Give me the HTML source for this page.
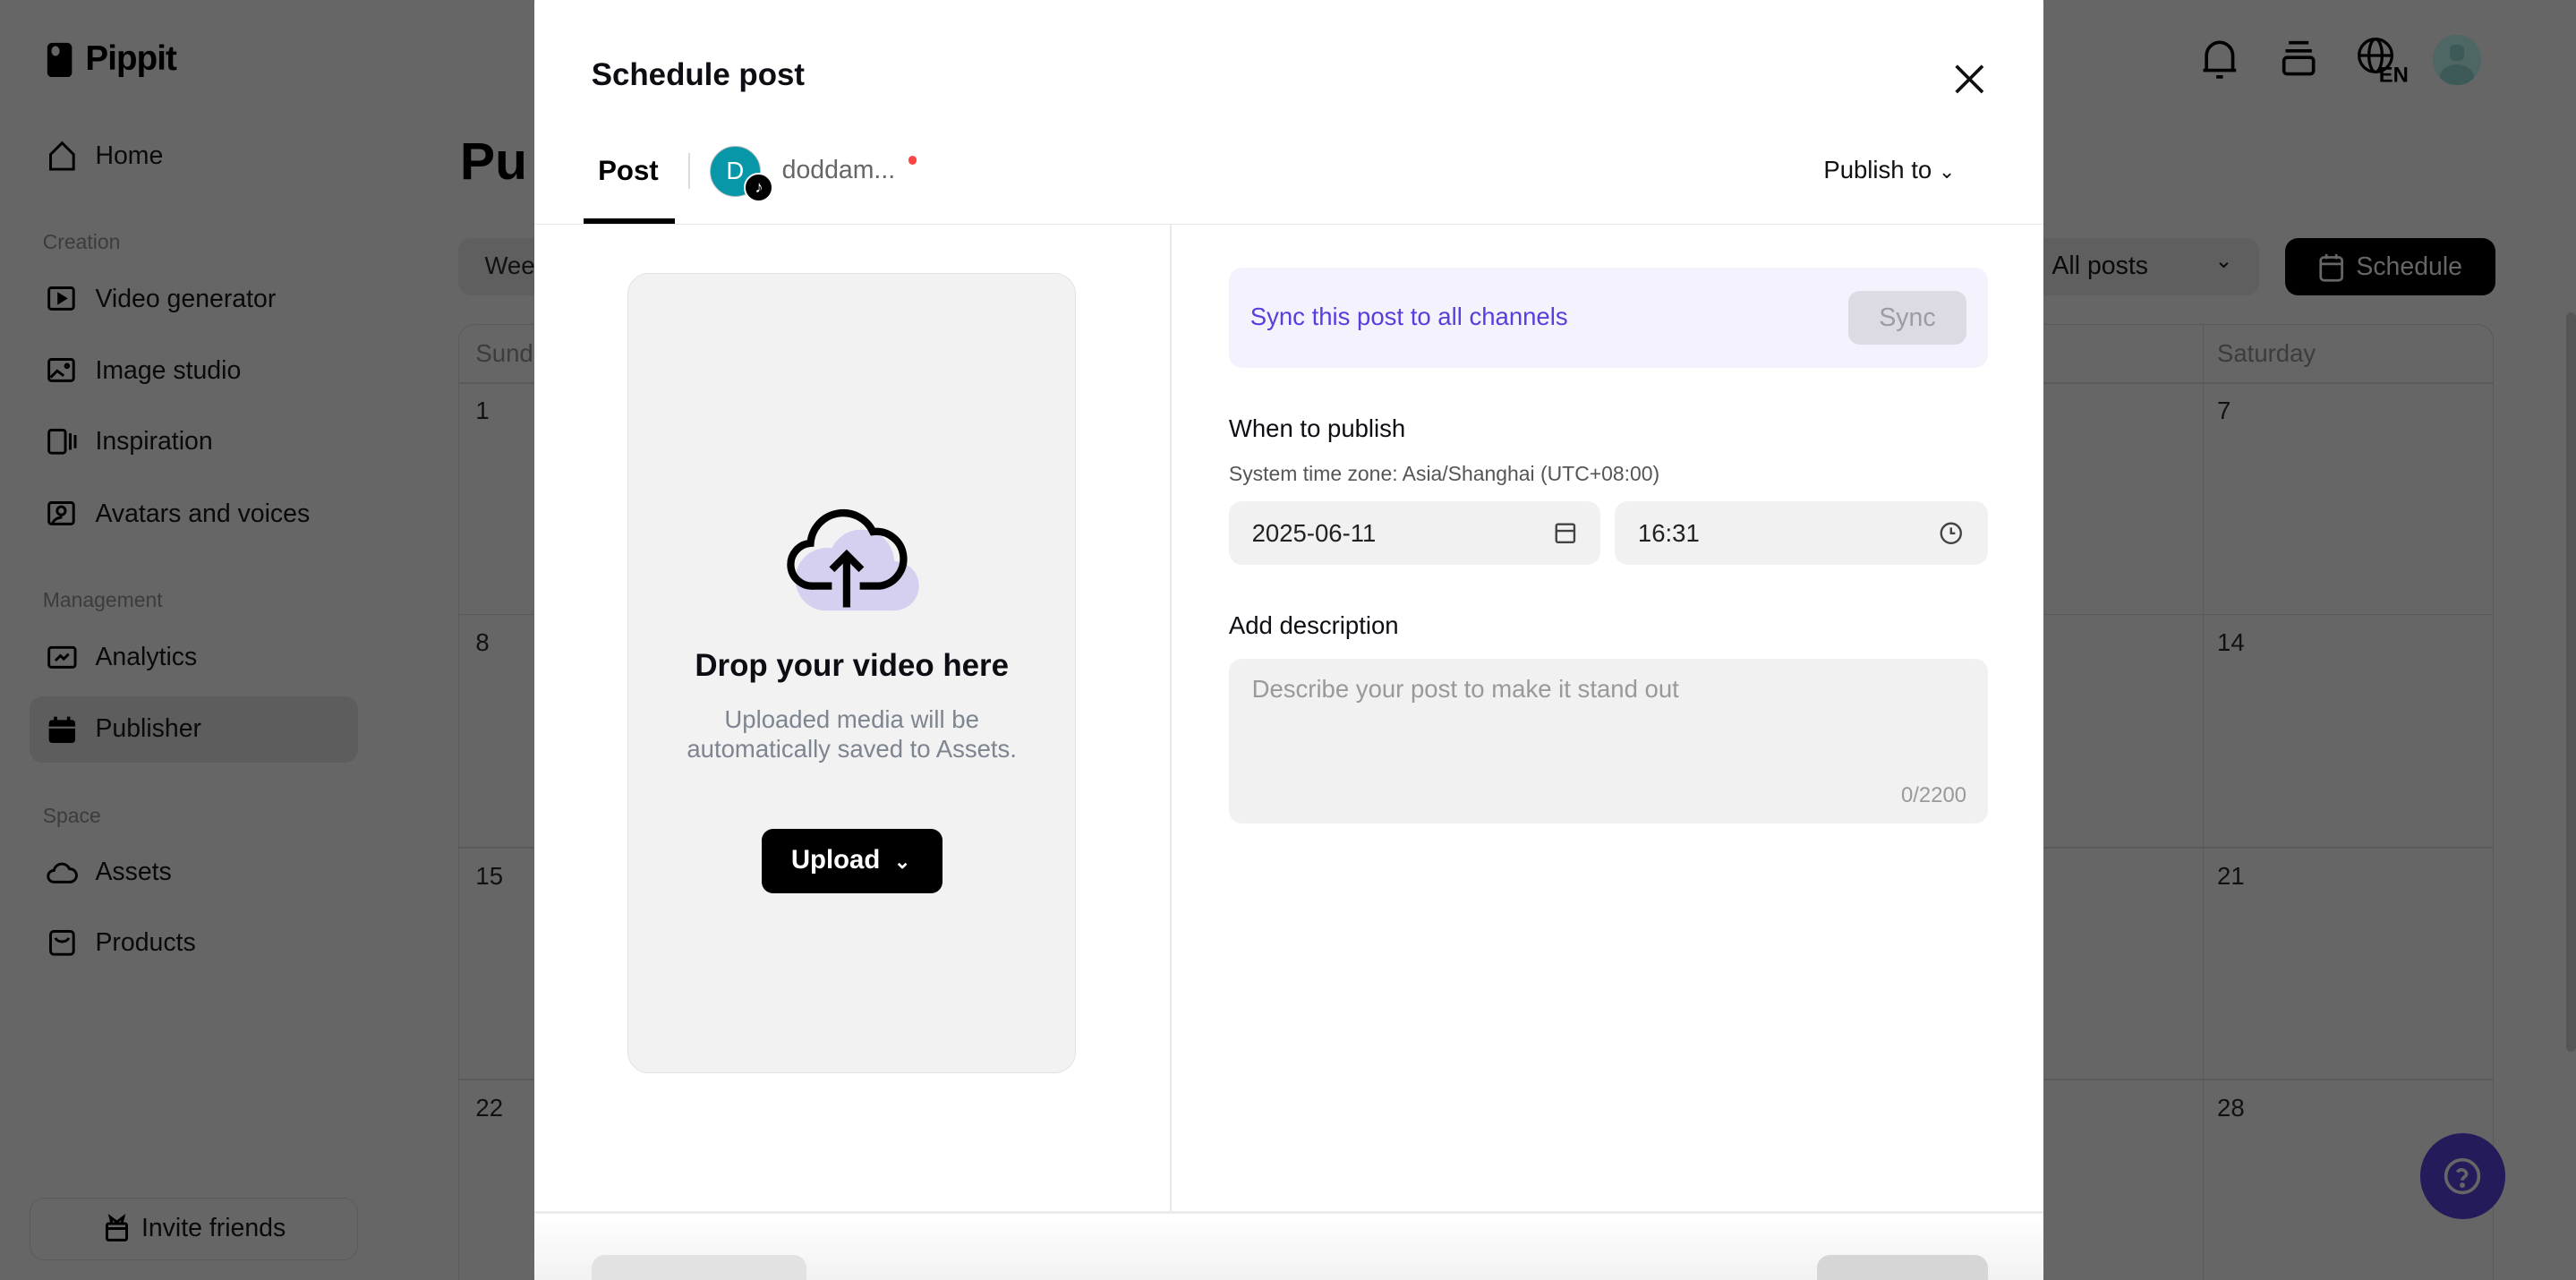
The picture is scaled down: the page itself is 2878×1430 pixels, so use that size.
<!DOCTYPE html>
<html><head><meta charset="utf-8"><style>
*{box-sizing:border-box;margin:0;padding:0}
html,body{width:2878px;height:1430px;overflow:hidden;background:#666}
#r{zoom:1.83546;width:1568px;height:779px;position:relative;background:#666;font-family:"Liberation Sans",sans-serif;color:#000;overflow:hidden}
.a{position:absolute}
.nav{position:absolute;left:28px;font-size:15.5px;color:#0a0a0a;display:flex;align-items:center;gap:10px}
.nav svg{width:20px;height:20px}
.sec{position:absolute;left:26px;font-size:12.5px;color:#3c3c3c}
.cal{position:absolute;left:279px;top:197px;width:1239px;height:600px;border:1px solid #5a5a5a;border-radius:10px}
.vl{position:absolute;top:0;bottom:0;width:1px;background:#5a5a5a}
.hl{position:absolute;left:0;right:0;height:1px;background:#5a5a5a}
.dn{position:absolute;font-size:15px;color:#111}
.m{position:absolute;left:325px;top:-14px;width:919px;height:820px;background:#fff;border-radius:16px;overflow:hidden}
.in{position:absolute;background:#f1f1f1;border-radius:8px}
</style></head><body><div id="r">
<!-- sidebar -->
<div class="a" style="left:28px;top:24px;display:flex;align-items:center;gap:6px">
<svg width="18" height="22" viewBox="0 0 18 22"><rect x="1" y="1" width="15" height="21" rx="3" fill="#000"/><ellipse cx="6" cy="6" rx="2.5" ry="3" fill="#666"/></svg>
<span style="font-size:21px;font-weight:bold;letter-spacing:-0.5px">Pippit</span></div>
<div class="nav" style="top:85px"><svg viewBox="0 0 20 20" fill="none" stroke="#000" stroke-width="1.6"><path d="M3 9l7-7 7 7v9H3z"/></svg>Home</div>
<div class="sec" style="top:140px">Creation</div>
<div class="nav" style="top:172px"><svg viewBox="0 0 20 20" fill="none" stroke="#000" stroke-width="1.6"><rect x="2" y="3" width="15" height="13" rx="1.5"/><path d="M8 7v5l4-2.5z" fill="#000"/></svg>Video generator</div>
<div class="nav" style="top:216px"><svg viewBox="0 0 20 20" fill="none" stroke="#000" stroke-width="1.6"><rect x="2" y="3" width="15" height="13" rx="1.5"/><path d="M3 14l4-4 4 3"/><circle cx="13" cy="7" r="1"/></svg>Image studio</div>
<div class="nav" style="top:259px"><svg viewBox="0 0 20 20" fill="none" stroke="#000" stroke-width="1.6"><rect x="2" y="3" width="10" height="14" rx="1.5"/><path d="M15 5v10M18 6v8"/></svg>Inspiration</div>
<div class="nav" style="top:303px"><svg viewBox="0 0 20 20" fill="none" stroke="#000" stroke-width="1.6"><rect x="2" y="3" width="15" height="13" rx="1.5"/><circle cx="9.5" cy="8" r="2.5"/><path d="M4 16c1-3 4-4 6-4"/></svg>Avatars and voices</div>
<div class="sec" style="top:358px">Management</div>
<div class="nav" style="top:390px"><svg viewBox="0 0 20 20" fill="none" stroke="#000" stroke-width="1.6"><rect x="2" y="4" width="16" height="12" rx="1.5"/><path d="M6 12l3-3 2 2 3-3"/></svg>Analytics</div>
<div class="a" style="left:18px;top:424px;width:200px;height:40px;background:#5d5d5d;border-radius:8px"></div>
<div class="nav" style="top:434px"><svg viewBox="0 0 20 20"><rect x="2" y="4" width="16" height="14" rx="2" fill="#000"/><rect x="5" y="2" width="2" height="4" fill="#000"/><rect x="13" y="2" width="2" height="4" fill="#000"/><rect x="2" y="8" width="16" height="1.2" fill="#5d5d5d"/></svg>Publisher</div>
<div class="sec" style="top:489px">Space</div>
<div class="nav" style="top:521px"><svg viewBox="0 0 20 20" fill="none" stroke="#000" stroke-width="1.6"><path d="M5 16a3.5 3.5 0 010-7 5 5 0 019.5-1A4 4 0 0115 16z"/></svg>Assets</div>
<div class="nav" style="top:564px"><svg viewBox="0 0 20 20" fill="none" stroke="#000" stroke-width="1.6"><rect x="3" y="3" width="14" height="14" rx="2"/><path d="M6 7c1 3 7 3 8 0"/></svg>Products</div>
<div class="a" style="left:18px;top:729px;width:200px;height:38px;border:1px solid #5a5a5a;border-radius:9px;display:flex;align-items:center;justify-content:center;gap:6px;font-size:15.5px;color:#0a0a0a"><svg width="18" height="18" viewBox="0 0 18 18" fill="none" stroke="#000" stroke-width="1.6"><rect x="3" y="6" width="12" height="10" rx="1"/><path d="M3 9h12M6 6L5 2l4 3 4-3-1 4"/></svg>Invite friends</div>
<!-- main -->
<div class="a" style="left:280px;top:80px;font-size:32px;font-weight:bold">Pu</div>
<div class="a" style="left:279px;top:145px;width:60px;height:35px;background:#5f5f5f;border-radius:8px;font-size:15px;padding:8px 16px;color:#111">Week</div>
<div class="a" style="left:1230px;top:145px;width:145px;height:35px;background:#5f5f5f;border-radius:8px;font-size:15.5px;padding:8px 19px;color:#0a0a0a">All posts<span style="position:absolute;right:16px;top:6px;font-size:13px">&#8964;</span></div>
<div class="a" style="left:1391px;top:145px;width:128px;height:35px;background:#000;border-radius:8px;display:flex;align-items:center;justify-content:center;gap:7px;color:#666;font-size:15.5px"><svg width="16" height="18" viewBox="0 0 16 18" fill="none" stroke="#666" stroke-width="1.5"><rect x="1.5" y="3" width="13" height="14" rx="2"/><path d="M1.5 7h13M5 1v3M11 1v3"/></svg>Schedule</div>
<svg class="a" style="left:1338px;top:22px" width="26" height="28" viewBox="0 0 26 28" fill="none" stroke="#000" stroke-width="2"><path d="M5 20V12a8 8 0 0116 0v8M3 21h20M11 25h4M13 3v2"/></svg>
<svg class="a" style="left:1388px;top:24px" width="22" height="24" viewBox="0 0 22 24" fill="none" stroke="#000" stroke-width="2"><path d="M5 2h12M3 7h16"/><rect x="2" y="11" width="18" height="10" rx="2"/></svg>
<svg class="a" style="left:1434px;top:22px" width="34" height="30" viewBox="0 0 34 30"><g fill="none" stroke="#000" stroke-width="1.8"><circle cx="12" cy="12" r="10"/><ellipse cx="12" cy="12" rx="4" ry="10"/><path d="M2 12h20"/></g><text x="14" y="28" font-size="13" font-weight="bold" font-family="Liberation Sans">EN</text></svg>
<div class="a" style="left:1481px;top:21px;width:29px;height:31px;border-radius:50%;background:#4e6664;overflow:hidden"><div class="a" style="left:10px;top:6px;width:9px;height:10px;background:#3d5a58;border-radius:3px"></div><div class="a" style="left:4px;top:18px;width:21px;height:16px;background:#3d5a58;border-radius:50%"></div></div>
<!-- calendar -->
<div class="cal">
<div class="hl" style="top:35px"></div><div class="hl" style="top:176px"></div><div class="hl" style="top:318px"></div><div class="hl" style="top:459px"></div>
<div class="vl" style="left:1061px"></div>
<div class="dn" style="left:10px;top:9px;color:#3c3c3c">Sunday</div>
<div class="dn" style="left:1070px;top:9px;color:#3c3c3c">Saturday</div>
<div class="dn" style="left:10px;top:44px">1</div><div class="dn" style="left:1070px;top:44px">7</div>
<div class="dn" style="left:10px;top:185px">8</div><div class="dn" style="left:1070px;top:185px">14</div>
<div class="dn" style="left:10px;top:327px">15</div><div class="dn" style="left:1070px;top:327px">21</div>
<div class="dn" style="left:10px;top:468px">22</div><div class="dn" style="left:1070px;top:468px">28</div>
</div>
<div class="a" style="left:1562px;top:190px;width:6px;height:450px;background:#555;border-radius:3px"></div>
<div class="a" style="left:1473px;top:690px;width:52px;height:52px;border-radius:50%;background:#241b5a"></div>
<svg class="a" style="left:1487px;top:704px" width="24" height="24" viewBox="0 0 24 24" fill="none" stroke="#666" stroke-width="2"><circle cx="12" cy="12" r="10"/><path d="M9 9.5a3 3 0 015.5 1c0 2-2.5 2-2.5 4"/><circle cx="12" cy="17.5" r=".6" fill="#666"/></svg>
<!-- modal -->
<div class="m">
<div class="a" style="left:35px;top:49px;font-size:19px;font-weight:bold;color:#0d0d14">Schedule post</div>
<svg class="a" style="left:864px;top:52px" width="20" height="20" viewBox="0 0 20 20" stroke="#111" stroke-width="2"><path d="M2 2l16 16M18 2L2 18"/></svg>
<div class="a" style="left:39px;top:108px;font-size:17px;font-weight:bold">Post</div>
<div class="a" style="left:30px;top:147px;width:56px;height:3px;background:#000"></div>
<div class="a" style="left:94px;top:107px;width:1px;height:22px;background:#ddd"></div>
<div class="a" style="left:107px;top:103px;width:31px;height:31px;border-radius:50%;background:#0797a8;border:1px solid #bbb;color:#fff;font-size:15px;text-align:center;line-height:29px">D</div>
<div class="a" style="left:128px;top:119px;width:18px;height:18px;border-radius:50%;background:#000;border:1.5px solid #fff;color:#fff;font-size:10px;text-align:center;line-height:15px">♪</div>
<div class="a" style="left:151px;top:109px;font-size:15.5px;color:#666">doddam...</div>
<div class="a" style="left:228px;top:109px;width:5px;height:5px;border-radius:50%;background:#f44"></div>
<div class="a" style="left:785px;top:109px;font-size:15px;color:#111">Publish to <span style="font-size:12px">&#8964;</span></div>
<div class="a" style="left:0;top:150px;width:919px;height:1px;background:#e8e8e8"></div>
<div class="a" style="left:387px;top:151px;width:1px;height:600px;background:#e8e8e8"></div>
<!-- upload -->
<div class="a" style="left:57px;top:180px;width:273px;height:487px;background:#f2f2f2;border:1px solid #e2e2e2;border-radius:13px">
<svg class="a" style="left:96px;top:133px" width="92" height="76" viewBox="0 0 92 76"><path d="M22 72h44a15 15 0 000-30 20 20 0 00-38-8 18 18 0 00-6 38z" fill="#d6d0f0"/><path d="M28 57H17a13 13 0 01-2-26A20 20 0 0153 24a15 15 0 014 33H45" fill="none" stroke="#000" stroke-width="4.5"/><path d="M37 70V38M28 47l9-9 9 9" fill="none" stroke="#000" stroke-width="4.5"/></svg>
<div class="a" style="left:0;width:100%;top:228px;text-align:center;font-size:19px;font-weight:bold;color:#0d0d14">Drop your video here</div>
<div class="a" style="left:0;width:100%;top:262px;text-align:center;font-size:15px;line-height:18px;color:#7d8590">Uploaded media will be<br>automatically saved to Assets.</div>
<div class="a" style="left:81px;top:338px;width:110px;height:39px;background:#000;border-radius:7px;color:#fff;font-size:16px;font-weight:bold;padding:10px 18px">Upload <span style="font-size:12px;margin-left:4px">&#8964;</span></div>
</div>
<!-- right -->
<div class="a" style="left:423px;top:177px;width:462px;height:61px;background:#f4f2fd;border-radius:8px">
<div class="a" style="left:13px;top:21px;font-size:15px;color:#5a3ddd">Sync this post to all channels</div>
<div class="a" style="right:13px;top:14px;width:72px;height:33px;background:#dcdbe3;border-radius:7px;color:#9c9ba5;font-size:15.5px;text-align:center;line-height:33px">Sync</div>
</div>
<div class="a" style="left:423px;top:266px;font-size:15px;color:#0d0d14">When to publish</div>
<div class="a" style="left:423px;top:295px;font-size:12.5px;color:#555">System time zone: Asia/Shanghai (UTC+08:00)</div>
<div class="in" style="left:423px;top:319px;width:226px;height:39px"><span class="a" style="left:14px;top:11px;font-size:15px;color:#222">2025-06-11</span><svg class="a" style="left:198px;top:12px" width="14" height="15" viewBox="0 0 14 15" fill="none" stroke="#444" stroke-width="1.3"><rect x="1.5" y="2" width="11" height="11" rx="1"/><path d="M1.5 6h11"/></svg></div>
<div class="in" style="left:658px;top:319px;width:227px;height:39px"><span class="a" style="left:14px;top:11px;font-size:15px;color:#222">16:31</span><svg class="a" style="left:197px;top:12px" width="15" height="15" viewBox="0 0 15 15" fill="none" stroke="#444" stroke-width="1.3"><circle cx="7.5" cy="7.5" r="6"/><path d="M7.5 4v3.5h2.5"/></svg></div>
<div class="a" style="left:423px;top:386px;font-size:15px;color:#0d0d14">Add description</div>
<div class="in" style="left:423px;top:415px;width:462px;height:100px"><span class="a" style="left:14px;top:10px;font-size:15px;color:#999">Describe your post to make it stand out</span><span class="a" style="right:13px;bottom:9px;font-size:13px;color:#999">0/2200</span></div>
<!-- footer -->
<div class="a" style="left:0;top:751px;width:919px;height:2px;background:#ececec"></div>
<div class="a" style="left:0;top:753px;width:919px;height:67px;background:linear-gradient(#fff,#e9e9e9)"></div>
<div class="a" style="left:35px;top:778px;width:131px;height:40px;background:#e2e2e2;border-radius:8px"></div>
<div class="a" style="left:781px;top:778px;width:104px;height:40px;background:#d6d6d6;border-radius:8px"></div>
</div>
</div></body></html>
